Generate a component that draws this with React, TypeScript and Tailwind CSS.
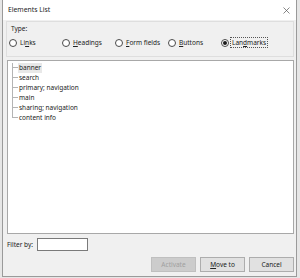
import { ReactNode } from "react";

const types = [
    { pre: "Li", key: "n", post: "ks", checked: false },
    { pre: "", key: "H", post: "eadings", checked: false },
    { pre: "", key: "F", post: "orm fields", checked: false },
    { pre: "", key: "B", post: "uttons", checked: false },
    { pre: "Lan", key: "d", post: "marks", checked: true },
];

const items = [
    "banner",
    "search",
    "primary; navigation",
    "main",
    "sharing; navigation",
    "content info",
];

function Radio({ checked, children }: { checked: boolean; children: ReactNode }) {
    return (
        <div className="flex items-center w-[53px] shrink-0">
            <span className="w-[8px] h-[8px] rounded-full border border-[#4a4a4a] bg-white flex items-center justify-center shrink-0">
                {checked && <span className="w-[4px] h-[4px] rounded-full bg-[#1a1a1a]" />}
            </span>
            <span
                className={
                    "ml-[2px] px-[1px] leading-[9px] " +
                    (checked ? "outline outline-1 outline-dotted outline-[#555555]" : "")
                }
            >
                {children}
            </span>
        </div>
    );
}

function Button({ children, disabled }: { children: ReactNode; disabled?: boolean }) {
    return (
        <div
            className={
                "w-[45px] h-[15px] flex items-center justify-center border " +
                (disabled
                    ? "bg-[#cccccc] border-[#bfbfbf] text-[#a0a0a0]"
                    : "bg-[#e1e1e1] border-[#adadad] text-[#222222]")
            }
        >
            {children}
        </div>
    );
}

export default function App() {
    return (
        <div className="w-[300px] h-[278px] bg-[#e6e6e6] font-['Noto_Sans',sans-serif] text-[6.5px] text-[#222222] overflow-hidden">
            <div className="ml-[2px] w-[295px] h-[277px] border-x border-b border-[#9a9a9a] flex flex-col">
                {/* Title bar */}
                <div className="h-[20px] bg-white flex items-center justify-between pl-[5px] pr-[5px] shrink-0">
                    <span className="text-[6.8px]">Elements List</span>
                    <svg width="7" height="7" viewBox="0 0 7 7" className="mr-[1px]">
                        <path d="M0.5 0.5 L6.5 6.5 M6.5 0.5 L0.5 6.5" stroke="#555" strokeWidth="0.7" />
                    </svg>
                </div>

                {/* Body */}
                <div className="flex-1 bg-[#f0f0f0] flex flex-col">
                    {/* Type group */}
                    <div className="mt-[1px] ml-[3px] mr-[2px] h-[36px] border border-[#dedede] flex flex-col">
                        <div className="pl-[4px] pt-[2px] h-[12px] flex items-center">Type:</div>
                        <div className="flex items-center pl-[2px] mt-[4px]">
                            {types.map((t) => (
                                <Radio key={t.post} checked={t.checked}>
                                    {t.pre}
                                    <span className="underline">{t.key}</span>
                                    {t.post}
                                </Radio>
                            ))}
                        </div>
                    </div>

                    {/* Tree list */}
                    <div className="mt-[3px] ml-[4px] mr-[2px] h-[174px] bg-white border border-[#a8a8a8] pt-[2px]">
                        {items.map((item, i) => (
                            <div key={item} className="flex h-[10px]">
                                <div className="ml-[4px] w-[6px] flex flex-col shrink-0">
                                    <div className="h-[5px] border-l border-b border-[#b4b4b4]" />
                                    <div
                                        className={
                                            "flex-1 border-l " +
                                            (i < items.length - 1 ? "border-[#b4b4b4]" : "border-transparent")
                                        }
                                    />
                                </div>
                                <span
                                    className={
                                        "px-[1px] flex items-center leading-[10px] " +
                                        (i === 0 ? "bg-[#e8e8e8]" : "")
                                    }
                                >
                                    {item}
                                </span>
                            </div>
                        ))}
                    </div>

                    {/* Filter */}
                    <div className="mt-[4px] ml-[4px] h-[13px] flex items-center">
                        <span>Filter by:</span>
                        <div className="ml-[4px] w-[51px] h-[13px] bg-white border border-[#7a7a7a]" />
                    </div>

                    {/* Buttons */}
                    <div className="mt-[6px] mr-[2px] flex justify-end gap-[4px]">
                        <Button disabled>Activate</Button>
                        <Button>
                            <span>
                                <span className="underline">M</span>ove to
                            </span>
                        </Button>
                        <Button>Cancel</Button>
                    </div>
                </div>
            </div>
        </div>
    );
}
